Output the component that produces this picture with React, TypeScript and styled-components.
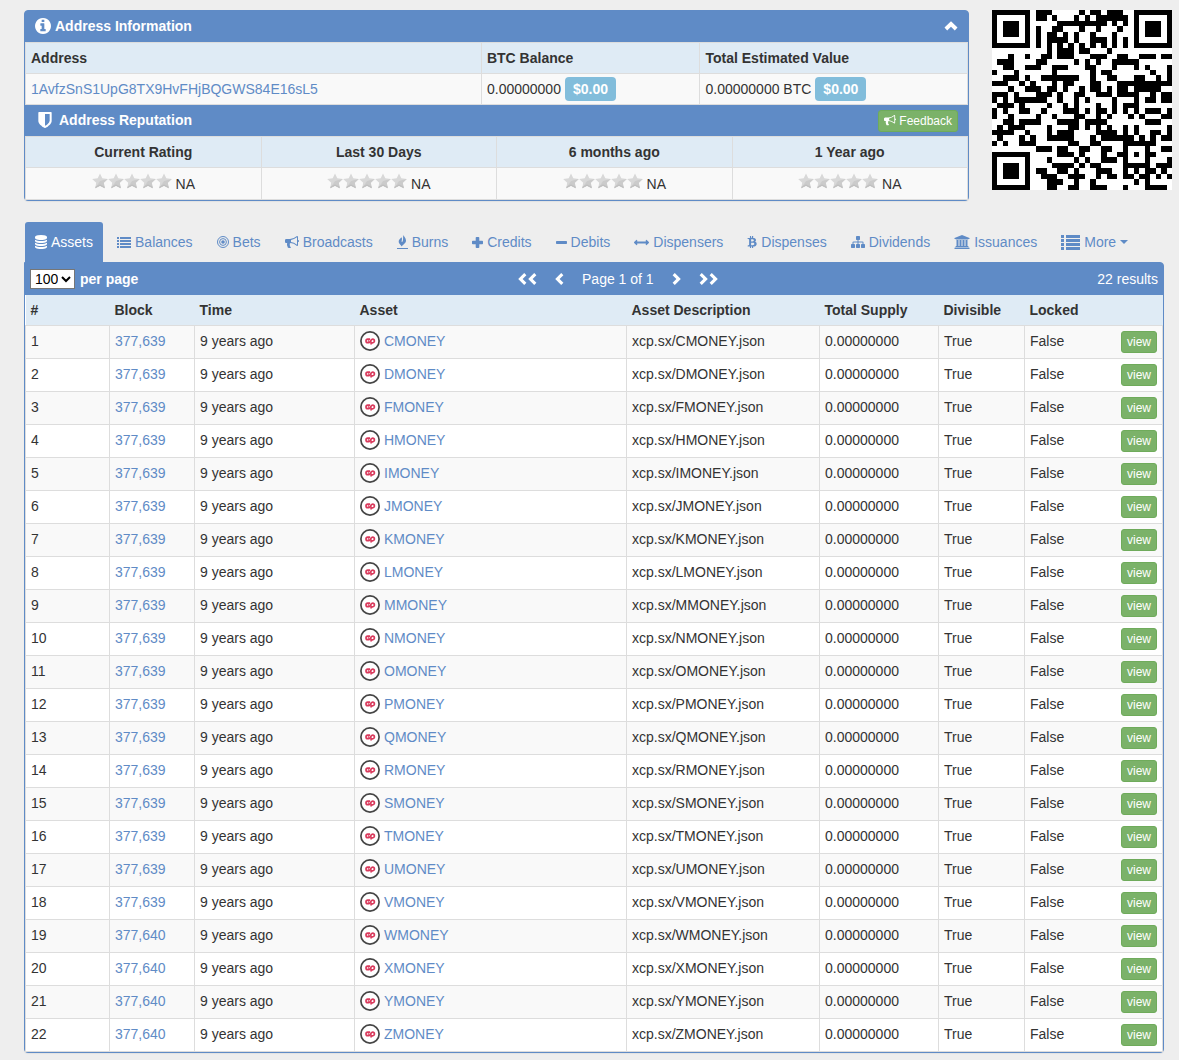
import React, { useState } from "react";
import styled, { createGlobalStyle } from "styled-components";

const blue = "#5f8bc6";
const line = "#dddddd";
const sky = "#dfebf5";
const green = "#7bb269";

const GlobalStyle = createGlobalStyle`
  *, *::before, *::after { box-sizing: border-box; }
  body {
    margin: 0;
    background: #eeeeee;
    color: #333333;
    font: 14px/20px "Helvetica Neue", "Liberation Sans", Arial, sans-serif;
  }
  a { color: ${blue}; text-decoration: none; }
  button, select { font-family: inherit; }
`;

/* ---------- icons ---------- */

const Svg = styled.svg`
  flex: none;
  fill: currentColor;
  display: block;
`;

type IconProps = { size?: number };
const glyph = (box: string, w: number, h: number, d: string) =>
  function Glyph({ size = 1 }: IconProps) {
    return (
      <Svg viewBox={box} width={w * size} height={h * size} aria-hidden="true">
        <path fillRule="evenodd" d={d} />
      </Svg>
    );
  };

const InfoIcon = glyph("0 128 1536 1536", 16, 16, "M1024 1376v-160q0-14-9-23t-23-9h-96v-512q0-14-9-23t-23-9h-320q-14 0-23 9t-9 23v160q0 14 9 23t23 9h96v320h-96q-14 0-23 9t-9 23v160q0 14 9 23t23 9h448q14 0 23-9t9-23zm-128-896v-160q0-14-9-23t-23-9h-192q-14 0-23 9t-9 23v160q0 14 9 23t23 9h192q14 0 23-9t9-23zm640 416q0 209-103 385.500t-279.500 279.500-385.500 103-385.500-103-279.500-279.500-103-385.500 103-385.500 279.500-279.500 385.500-103 385.500 103 279.500 279.500 103 385.500z");
const ShieldIcon = glyph("0 0 1280 1536", 14, 16, "M1088 832v-640h-448v1137q119-63 213-137 235-184 235-360zm192-768v768q0 86-33.500 170.500t-83 150-118 127.500-126.500 103-121 77.500-89.500 49.500-42.500 20q-12 6-26 6t-26-6q-16-7-42.500-20t-89.500-49.500-121-77.500-126.500-103-118-127.500-83-150-33.500-170.500v-768q0-26 19-45t45-19h1152q26 0 45 19t19 45z");
const DatabaseIcon = glyph("0 0 1536 1792", 12, 14, "M768 768q237 0 443-43t325-127v170q0 69-103 128t-280 93.500-385 34.500-385-34.500-280-93.500-103-128v-170q119 84 325 127t443 43zm0 768q237 0 443-43t325-127v170q0 69-103 128t-280 93.500-385 34.500-385-34.500-280-93.500-103-128v-170q119 84 325 127t443 43zm0-384q237 0 443-43t325-127v170q0 69-103 128t-280 93.500-385 34.500-385-34.500-280-93.500-103-128v-170q119 84 325 127t443 43zm0-1152q208 0 385 34.500t280 93.500 103 128v128q0 69-103 128t-280 93.500-385 34.500-385-34.500-280-93.500-103-128v-128q0-69 103-128t280-93.500 385-34.500z");
const HornIcon = glyph("0 128 1792 1536", 14, 12, "M1664 640q53 0 90.500 37.500t37.500 90.500-37.500 90.500-90.500 37.500v384q0 52-38 90t-90 38q-417-347-812-380-58 19-91 66t-31 100.500 40 92.500q-20 33-23 65.500t6 58 33.500 55 48 50 61.500 50.500q-29 58-111.500 83t-168.500 11.500-132-55.500q-7-23-29.500-87.500t-32-94.500-23-89-15-101 3.500-98 22-110.500h-122q-66 0-113-47t-47-113v-192q0-66 47-113t113-47h480q435 0 896-384 52 0 90 38t38 90v384zm-128 604v-954q-394 302-768 343v270q377 42 768 341z");
const SitemapIcon = glyph("0 128 1792 1536", 14, 12, "M1792 1248v320q0 40-28 68t-68 28h-320q-40 0-68-28t-28-68v-320q0-40 28-68t68-28h96v-192h-512v192h96q40 0 68 28t28 68v320q0 40-28 68t-68 28h-320q-40 0-68-28t-28-68v-320q0-40 28-68t68-28h96v-192h-512v192h96q40 0 68 28t28 68v320q0 40-28 68t-68 28h-320q-40 0-68-28t-28-68v-320q0-40 28-68t68-28h96v-192q0-52 38-90t90-38h512v-192h-96q-40 0-68-28t-28-68v-320q0-40 28-68t68-28h320q40 0 68 28t28 68v320q0 40-28 68t-68 28h-96v192h512q52 0 90 38t38 90v192h96q40 0 68 28t28 68z");
const BankIcon = glyph("0 0 1920 1792", 16, 14, "M960 0l960 384v128h-128q0 26-20.500 45t-48.500 19h-1526q-28 0-48.500-19t-20.500-45h-128v-128zm-704 640h256v768h128v-768h256v768h128v-768h256v768h128v-768h256v768h59q28 0 48.500 19t20.500 45v64h-1664v-64q0-26 20.500-45t48.500-19h59v-768zm1595 960q28 0 48.500 19t20.500 45v128h-1920v-128q0-26 20.500-45t48.500-19h1782z");
const ArrowsIcon = glyph("0 256 1792 1280", 15, 11, "M1792 896q0 26-19 45l-256 256q-19 19-45 19t-45-19-19-45v-128h-1024v128q0 26-19 45t-45 19-45-19l-256-256q-19-19-19-45t19-45l256-256q19-19 45-19t45 19 19 45v128h1024v-128q0-26 19-45t45-19 45 19l256 256q19 19 19 45z");
const BtcIcon = glyph("0 128 1280 1600", 10, 12, "M1167 640q18 182-131 258 117 28 175 103t45 214q-7 71-32.500 125t-64.500 89-97 58.500-121.500 34.500-145.500 15v255h-154v-251q-80 0-122-1v252h-154v-255q-18 0-54-.5t-55-.5h-200l31-183h111q50 0 58-51v-402h16q-6-1-16-1v-287q-13-68-89-68h-111v-164l212 1q64 0 97-1v-252h154v247q82-2 122-2v-245h154v252q79 7 140 22.500t113 45 82.500 78 36.500 114.500zm-215 545q0-36-15-64t-37-46-57.500-30.500-65.500-18.500-74-9-69-3-64.500 1-47.500 1v338q8 0 37 .5t48 .5 53-1.500 58.500-4 57-8.500 55.500-14 47.500-21 39.500-30 24.500-40 9.500-51zm-71-476q0-33-12.500-58.500t-30.500-42-48-28-55-16.500-61.500-8-58-2.500-54 1-39.500.5v307q5 0 34.500.5t46.500 0 50-2 55-5.500 51.500-11 48.500-18.500 37-27 27-38.500 9-51z");
const ListIcon = glyph("0 0 14 11", 14, 11, "M0 0h2v2H0zM3 0h11v2H3zM0 3h2v2H0zM3 3h11v2H3zM0 6h2v2H0zM3 6h11v2H3zM0 9h2v2H0zM3 9h11v2H3z");
const BigListIcon = glyph("0 0 19 15", 19, 15, "M0 0h3v3H0zM5 0h14v3H5zM0 4h3v3H0zM5 4h14v3H5zM0 8h3v3H0zM5 8h14v3H5zM0 12h3v3H0zM5 12h14v3H5z");
const PlusIcon = glyph("0 0 11 11", 11, 11, "M4.500 0h2a.8.8 0 0 1 .8.8v2.900h2.900a.8.8 0 0 1 .8.8v2a.8.8 0 0 1-.8.800H7.300v2.900a.8.8 0 0 1-.8.800h-2a.8.8 0 0 1-.8-.8V7.300H.800a.8.8 0 0 1-.8-.8v-2a.8.8 0 0 1 .8-.800h2.900V.800a.8.8 0 0 1 .8-.800z");
const MinusIcon = glyph("0 0 11 3", 11, 3, "M.8 0h9.400a.8.8 0 0 1 .8.800v1.400a.8.8 0 0 1-.8.800H.800a.8.8 0 0 1-.8-.800V.800a.8.8 0 0 1 .8-.800z");
const FlameIcon = glyph("0 0 11 14", 11, 14, "M6.500 0C6.600 1.500 9 2.800 9 5.500c0 2.700-2.400 3.600-4.600 6C4.500 9.900 1.700 9 1.700 6.400c0-2 1.500-2.500 2.800-4.200C5.400 3.600 4.800 5 4.600 6.200c-.1.700.3 1 .8.5C6.700 5.200 5.600 2.400 6.500 0zM0 13h11v1H0z");
const ChevronLeft = glyph("0 0 9 12", 9, 12, "M6.200 0l2.200 2.200L4.600 6l3.800 3.800L6.200 12 .2 6z");
const ChevronRight = glyph("0 0 9 12", 9, 12, "M2.800 0L.600 2.200 4.400 6 .600 9.800 2.800 12l6-6z");
const ChevronUp = glyph("0 0 14 10", 14, 10, "M7 .300l6.500 6.300-2.700 2.800L7 5.700 3.200 9.400.5 6.600z");
const CaretIcon = glyph("0 0 8 4", 8, 4, "M0 0h8L4 4z");

const TargetIcon = () => (
  <Svg viewBox="0 0 12 12" width={12} height={12} aria-hidden="true">
    <g fill="none" stroke="currentColor">
      <circle cx="6" cy="6" r="5.500" />
      <circle cx="6" cy="6" r="3.400" />
    </g>
    <circle cx="6" cy="6" r="1.800" />
  </Svg>
);

const AssetIcon = () => (
  <Svg viewBox="0 0 20 20" width={20} height={20} aria-hidden="true">
    <circle cx="10" cy="10" r="9.100" fill="#ffffff" stroke="#454545" strokeWidth="1.700" />
    <g fill="none" stroke="#d93a5c" strokeWidth="1.700">
      <path d="M10.100 8.200H7.700a1.700 1.700 0 0 0 0 3.400h1.200c1 0 1.200-.6 1.500-1.300.5-1.200.9-2.100 2.200-2.100a1.800 1.800 0 0 1 0 3.600h-1" />
      <path d="M7.800 10h1.600M11.100 13.400v-3" />
    </g>
  </Svg>
);

const Star = () => (
  <Svg viewBox="0 0 16 16" width={16} height={16} aria-hidden="true">
    <path d="M8 .4l2.300 4.800 5.500.7-4 3.800 1 5.600L8 12.700l-4.800 2.600 1-5.600-4-3.800 5.500-.7z" fill="#d8d8d8" />
    <path d="M8 8l7.800-2.100-4 3.800 1 5.600L8 12.700l-4.800 2.600z" fill="#cbcbcb" />
    <path d="M8 12.700l-4.800 2.600.4-1.800L8 11.500l4.400 2 .4 1.800z" fill="#c0c0c0" />
  </Svg>
);

/* ---------- QR code (version 4, level H, mask 7) ---------- */

const QR_SIZE = 33;

function gfMul(a: number, b: number) {
  let r = 0;
  for (let i = 7; i >= 0; i--) {
    r = (r << 1) ^ ((r >>> 7) * 0x11d);
    r ^= ((b >>> i) & 1) * a;
  }
  return r;
}

function errorCodewords(data: number[], degree: number) {
  const gen: number[] = new Array(degree).fill(0);
  gen[degree - 1] = 1;
  let root = 1;
  for (let i = 0; i < degree; i++) {
    for (let j = 0; j < degree; j++) {
      gen[j] = gfMul(gen[j], root);
      if (j + 1 < degree) gen[j] ^= gen[j + 1];
    }
    root = gfMul(root, 2);
  }
  const rem: number[] = new Array(degree).fill(0);
  for (const b of data) {
    const factor = b ^ rem.shift()!;
    rem.push(0);
    gen.forEach((g, i) => (rem[i] ^= gfMul(g, factor)));
  }
  return rem;
}

function encodeQr(text: string) {
  const bits: number[] = [];
  const push = (v: number, n: number) => {
    for (let i = n - 1; i >= 0; i--) bits.push((v >>> i) & 1);
  };
  push(4, 4);
  push(text.length, 8);
  for (const c of text) push(c.charCodeAt(0), 8);
  push(0, 4);
  const data: number[] = [];
  for (let i = 0; i < bits.length; i += 8) data.push(parseInt(bits.slice(i, i + 8).join(""), 2));

  const blocks = [0, 1, 2, 3].map((k) => data.slice(k * 9, k * 9 + 9));
  const ecc = blocks.map((b) => errorCodewords(b, 16));
  const words: number[] = [];
  for (let i = 0; i < 9; i++) blocks.forEach((b) => words.push(b[i]));
  for (let i = 0; i < 16; i++) ecc.forEach((b) => words.push(b[i]));

  const grid: (boolean | null)[][] = Array.from({ length: QR_SIZE }, () => new Array(QR_SIZE).fill(null));
  const ring = (cy: number, cx: number, reach: number, dark: number[]) => {
    for (let dy = -reach; dy <= reach; dy++)
      for (let dx = -reach; dx <= reach; dx++) {
        const y = cy + dy;
        const x = cx + dx;
        if (y < 0 || x < 0 || y >= QR_SIZE || x >= QR_SIZE) continue;
        grid[y][x] = dark.includes(Math.max(Math.abs(dx), Math.abs(dy)));
      }
  };
  for (let i = 0; i < QR_SIZE; i++) grid[6][i] = grid[i][6] = i % 2 === 0;
  ring(3, 3, 4, [0, 1, 3]);
  ring(3, QR_SIZE - 4, 4, [0, 1, 3]);
  ring(QR_SIZE - 4, 3, 4, [0, 1, 3]);
  ring(26, 26, 2, [0, 2]);

  const format = 0b000100000111011;
  const bit = (i: number) => ((format >>> i) & 1) === 1;
  for (let i = 0; i <= 5; i++) grid[i][8] = bit(i);
  grid[7][8] = bit(6);
  grid[8][8] = bit(7);
  grid[8][7] = bit(8);
  for (let i = 9; i < 15; i++) grid[8][14 - i] = bit(i);
  for (let i = 0; i < 8; i++) grid[8][QR_SIZE - 1 - i] = bit(i);
  for (let i = 8; i < 15; i++) grid[QR_SIZE - 15 + i][8] = bit(i);
  grid[QR_SIZE - 8][8] = true;

  let n = 0;
  for (let right = QR_SIZE - 1; right >= 1; right -= 2) {
    if (right === 6) right = 5;
    for (let v = 0; v < QR_SIZE; v++)
      for (let j = 0; j < 2; j++) {
        const x = right - j;
        const y = ((right + 1) & 2) === 0 ? QR_SIZE - 1 - v : v;
        if (grid[y][x] !== null) continue;
        const value = n < words.length * 8 ? (words[n >>> 3] >>> (7 - (n & 7))) & 1 : 0;
        n++;
        const mask = (((x + y) % 2) + ((x * y) % 3)) % 2 === 0;
        grid[y][x] = (value === 1) !== mask;
      }
  }
  return grid;
}

const QrFrame = styled.svg`
  display: block;
  flex: none;
  background: #ffffff;
`;

function QrCode({ text, size }: { text: string; size: number }) {
  const at = (i: number) => Math.round((i * size) / QR_SIZE);
  let d = "";
  encodeQr(text).forEach((row, y) =>
    row.forEach((dark, x) => {
      if (dark) d += `M${at(x)} ${at(y)}H${at(x + 1)}V${at(y + 1)}H${at(x)}z`;
    })
  );
  return (
    <QrFrame width={size} height={size} viewBox={`0 0 ${size} ${size}`} shapeRendering="crispEdges" role="img" aria-label="Address QR code">
      <path d={d} />
    </QrFrame>
  );
}

/* ---------- layout ---------- */

const Page = styled.main`
  padding: 10px 0 8px 24px;
`;

const Top = styled.section`
  display: flex;
  align-items: flex-start;
  gap: 23px;
  padding-right: 7px;
`;

const Panel = styled.div`
  flex: 1;
  min-width: 0;
  border: 1px solid ${blue};
  border-radius: 4px;
  background: ${blue};
  box-shadow: 0 1px 1px rgba(0, 0, 0, 0.05);
`;

const Heading = styled.div<{ $inset: number }>`
  display: flex;
  align-items: center;
  height: 31px;
  padding: 0 10px 0 ${(p) => p.$inset}px;
  color: #ffffff;
`;

const Title = styled.h2<{ $gap: number }>`
  display: flex;
  align-items: center;
  gap: ${(p) => p.$gap}px;
  flex: 1;
  margin: 0;
  padding-bottom: 2px;
  font-size: 14px;
  line-height: 20px;
`;

const Collapse = styled.button`
  padding: 0 0 2px;
  border: 0;
  background: none;
  color: #ffffff;
`;

const Table = styled.table<{ $centered?: boolean }>`
  width: 100%;
  table-layout: fixed;
  border-collapse: collapse;
  background: #ffffff;
  text-align: ${(p) => (p.$centered ? "center" : "left")};
`;

const Col = styled.col<{ $width?: string }>`
  width: ${(p) => p.$width ?? "auto"};
`;

const Th = styled.th<{ $plain?: boolean }>`
  height: ${(p) => (p.$plain ? 30 : 31)}px;
  padding: 0 5px;
  border: 1px solid ${line};
  border-width: ${(p) => (p.$plain ? "0 0 1px" : "1px")};
  background: ${sky};
  font-weight: bold;
  text-align: inherit;
`;

const Td = styled.td<{ $open?: "left" | "right" }>`
  height: 31px;
  padding: 0 5px;
  border: 1px solid ${line};
  ${(p) => p.$open && `border-${p.$open}: 0;`}
  ${(p) => p.$open === "left" && "text-align: right;"}
  white-space: nowrap;
`;

const Row = styled.tr`
  background: #ffffff;
  &:nth-child(odd) { background: #f9f9f9; }
`;

const RatingRow = styled(Row)`
  ${Td} {
    height: 32px;
    padding: 5px 5px 4px;
    vertical-align: top;
  }
`;

const AssetRow = styled(Row)`
  ${Td} {
    height: 33px;
    padding: 5px;
    vertical-align: top;
  }
`;

const Inline = styled.span`
  display: flex;
  align-items: center;
  gap: 4px;
`;

const Badge = styled.span`
  padding: 0 8px;
  border-radius: 4px;
  background: #82bddb;
  color: #ffffff;
  font-weight: bold;
  line-height: 24px;
`;

const Rating = styled.span`
  display: flex;
  justify-content: center;
  align-items: flex-start;
  gap: 4px;
  line-height: 22px;
`;

const Stars = styled.span`
  display: flex;
`;

const GreenButton = styled.button`
  display: inline-flex;
  align-items: center;
  gap: 3px;
  height: 22px;
  padding: 0 5px;
  border: 1px solid #6fab5b;
  border-radius: 3px;
  background: ${green};
  color: #ffffff;
  font-size: 12px;
  line-height: 18px;
  vertical-align: top;
`;

const Tabs = styled.nav`
  display: flex;
  gap: 2px;
  margin-top: 20px;
`;

const Tab = styled.a<{ $active?: boolean }>`
  display: flex;
  align-items: center;
  gap: 4px;
  height: 41px;
  padding: 0 10px;
  border: 1px solid transparent;
  border-bottom: 0;
  border-radius: 4px 4px 0 0;
  background: ${(p) => (p.$active ? blue : "transparent")};
  background-clip: padding-box;
  color: ${(p) => (p.$active ? "#ffffff" : blue)};
  white-space: nowrap;
`;

const Results = styled(Panel)`
  margin-right: 15px;
  border-top-left-radius: 0;
`;

const Toolbar = styled.div`
  display: flex;
  justify-content: space-between;
  align-items: center;
  height: 32px;
  padding: 0 5px;
  color: #ffffff;
`;

const PerPage = styled.label`
  display: flex;
  align-items: center;
  gap: 5px;
  font-weight: bold;
`;

const PageSize = styled.select`
  width: 45px;
  height: 20px;
  padding: 0;
  border: 1px solid #767676;
  border-radius: 0;
  background: #ffffff;
  color: #000000;
  font-size: 14px;
`;

const Pager = styled.div`
  display: flex;
  align-items: center;
  gap: 18px;
`;

const PagerButton = styled.button`
  display: flex;
  gap: 1px;
  padding: 0;
  border: 0;
  background: none;
  color: #ffffff;
`;

/* ---------- data ---------- */

const address = "1AvfzSnS1UpG8TX9HvFHjBQGWS84E16sL5";
const periods = ["Current Rating", "Last 30 Days", "6 months ago", "1 Year ago"];

const tabs: [string, React.ComponentType][] = [
  ["Assets", DatabaseIcon],
  ["Balances", ListIcon],
  ["Bets", TargetIcon],
  ["Broadcasts", HornIcon],
  ["Burns", FlameIcon],
  ["Credits", PlusIcon],
  ["Debits", MinusIcon],
  ["Dispensers", ArrowsIcon],
  ["Dispenses", BtcIcon],
  ["Dividends", SitemapIcon],
  ["Issuances", BankIcon],
  ["More", BigListIcon],
];

const columnWidths = ["84px", "85px", "160px", "auto", "193px", "119px", "86px", "69px", "69px"];

const assets = [..."CDFHIJKLMNOPQRSTUVWXYZ"].map((letter, i) => ({
  name: `${letter}MONEY`,
  block: i < 18 ? "377,639" : "377,640",
}));

export default function App() {
  const [active, setActive] = useState("Assets");
  return (
    <Page>
      <GlobalStyle />
      <Top>
        <Panel>
          <Heading $inset={10}>
            <Title $gap={4}>
              <InfoIcon />
              Address Information
            </Title>
            <Collapse aria-label="Collapse">
              <ChevronUp />
            </Collapse>
          </Heading>
          <Table>
            <colgroup>
              <Col />
              <Col $width="23.2%" />
              <Col $width="28.4%" />
            </colgroup>
            <thead>
              <tr>
                <Th>Address</Th>
                <Th>BTC Balance</Th>
                <Th>Total Estimated Value</Th>
              </tr>
            </thead>
            <tbody>
              <Row>
                <Td><a href="#address">{address}</a></Td>
                <Td><Inline>0.00000000 <Badge>$0.00</Badge></Inline></Td>
                <Td><Inline>0.00000000 BTC <Badge>$0.00</Badge></Inline></Td>
              </Row>
            </tbody>
          </Table>
          <Heading $inset={13}>
            <Title $gap={7}>
              <ShieldIcon />
              Address Reputation
            </Title>
            <GreenButton>
              <HornIcon size={12 / 14} />
              Feedback
            </GreenButton>
          </Heading>
          <Table $centered>
            <thead>
              <tr>{periods.map((p) => <Th key={p}>{p}</Th>)}</tr>
            </thead>
            <tbody>
              <RatingRow>
                {periods.map((p) => (
                  <Td key={p}>
                    <Rating>
                      <Stars>{[0, 1, 2, 3, 4].map((i) => <Star key={i} />)}</Stars>
                      NA
                    </Rating>
                  </Td>
                ))}
              </RatingRow>
            </tbody>
          </Table>
        </Panel>
        <QrCode text={address} size={180} />
      </Top>

      <Tabs>
        {tabs.map(([label, Icon]) => (
          <Tab key={label} href={`#${label}`} $active={label === active} onClick={() => setActive(label)}>
            <Icon />
            {label}
            {label === "More" && <CaretIcon />}
          </Tab>
        ))}
      </Tabs>

      <Results>
        <Toolbar>
          <PerPage>
            <PageSize defaultValue="100">
              <option>25</option>
              <option>50</option>
              <option>100</option>
            </PageSize>
            per page
          </PerPage>
          <Pager>
            <PagerButton aria-label="First page"><ChevronLeft /><ChevronLeft /></PagerButton>
            <PagerButton aria-label="Previous page"><ChevronLeft /></PagerButton>
            <span>Page 1 of 1</span>
            <PagerButton aria-label="Next page"><ChevronRight /></PagerButton>
            <PagerButton aria-label="Last page"><ChevronRight /><ChevronRight /></PagerButton>
          </Pager>
          <span>22 results</span>
        </Toolbar>
        <Table>
          <colgroup>
            {columnWidths.map((width, i) => <Col key={i} $width={width} />)}
          </colgroup>
          <thead>
            <tr>
              <Th $plain>#</Th>
              <Th $plain>Block</Th>
              <Th $plain>Time</Th>
              <Th $plain>Asset</Th>
              <Th $plain>Asset Description</Th>
              <Th $plain>Total Supply</Th>
              <Th $plain>Divisible</Th>
              <Th $plain colSpan={2}>Locked</Th>
            </tr>
          </thead>
          <tbody>
            {assets.map((a, i) => (
              <AssetRow key={a.name}>
                <Td>{i + 1}</Td>
                <Td><a href="#block">{a.block}</a></Td>
                <Td>9 years ago</Td>
                <Td><Inline><AssetIcon /><a href={`#${a.name}`}>{a.name}</a></Inline></Td>
                <Td>xcp.sx/{a.name}.json</Td>
                <Td>0.00000000</Td>
                <Td>True</Td>
                <Td $open="right">False</Td>
                <Td $open="left"><GreenButton>view</GreenButton></Td>
              </AssetRow>
            ))}
          </tbody>
        </Table>
      </Results>
    </Page>
  );
}
